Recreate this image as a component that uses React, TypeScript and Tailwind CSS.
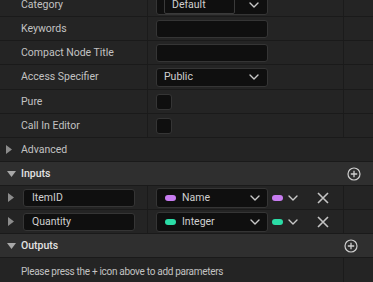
import React from 'react';

const FONT = { fontFamily: 'Roboto, "Noto Sans", sans-serif' };

function Chevron({ className = '' }: { className?: string }) {
  return (
    <svg width="10" height="6" viewBox="0 0 10 6" className={className}>
      <path d="M1 1l4 4 4-4" fill="none" stroke="#c8c8c8" strokeWidth="1.4" strokeLinecap="round" strokeLinejoin="round" />
    </svg>
  );
}

function TriRight() {
  return (
    <svg width="6" height="9" viewBox="0 0 6 9">
      <path d="M0 0L6 4.5 0 9z" fill="#8c8c8c" />
    </svg>
  );
}

function TriDown() {
  return (
    <svg width="9" height="6" viewBox="0 0 9 6">
      <path d="M0 0h9L4.5 6z" fill="#a8a8a8" />
    </svg>
  );
}

function PlusCircle() {
  return (
    <svg width="14" height="14" viewBox="0 0 14 14">
      <circle cx="7" cy="7" r="6" fill="none" stroke="#cfcfcf" strokeWidth="1.2" />
      <path d="M7 3.8v6.4M3.8 7h6.4" stroke="#cfcfcf" strokeWidth="1.3" />
    </svg>
  );
}

function Cross() {
  return (
    <svg width="12" height="12" viewBox="0 0 12 12">
      <path d="M1 1l10 10M11 1L1 11" stroke="#c4c4c4" strokeWidth="1.6" />
    </svg>
  );
}

function TextBox() {
  return <div className="w-[112px] h-[18px] rounded-[3px] bg-[#0f0f0f] border border-[#353535]" />;
}

function CheckBox() {
  return <div className="w-[16px] h-[16px] rounded-[3px] bg-[#0f0f0f] border border-[#353535]" />;
}

// property row: name | value | empty gutter
function PropRow({ label, tall, children }: { label: string; tall?: boolean; children?: React.ReactNode }) {
  return (
    <div className={`flex ${tall ? 'h-[25px]' : 'h-[24px]'} shrink-0 bg-[#242424] border-b border-[#1a1a1a]`}>
      <div className="w-[148px] flex items-center pl-[21px] border-r border-[#1b1b1b] text-[#c2c2c2]">{label}</div>
      <div className="w-[196px] flex items-center pl-[8px] border-r border-[#1b1b1b]">{children}</div>
      <div className="flex-1" />
    </div>
  );
}

function Header({ label, plusPad }: { label: string; plusPad: string }) {
  return (
    <div className="flex h-[24px] shrink-0 items-center bg-[#2f2f2f] border-b border-[#1a1a1a]">
      <div className="w-[21px] flex justify-center pl-[1px]">
        <TriDown />
      </div>
      <span className="font-medium text-[#e2e2e2]">{label}</span>
      <div className={`ml-auto flex items-center ${plusPad}`}>
        <PlusCircle />
      </div>
    </div>
  );
}

function ParamRow({ name, type, color }: { name: string; type: string; color: string }) {
  return (
    <div className="flex h-[24px] shrink-0 bg-[#242424] border-b border-[#1a1a1a]">
      <div className="w-[148px] flex items-center border-r border-[#1b1b1b]">
        <div className="w-[23px] flex justify-center pr-[1px]">
          <TriRight />
        </div>
        <div className="w-[112px] h-[18px] rounded-[3px] bg-[#0f0f0f] border border-[#353535] flex items-center pl-[8px] text-[#cfcfcf]">
          {name}
        </div>
      </div>
      <div className="w-[196px] flex items-center pl-[8px] border-r border-[#1b1b1b]">
        <div className="w-[112px] h-[20px] rounded-[3px] bg-[#0f0f0f] border border-[#353535] flex items-center pl-[8px] pr-[7px]">
          <span className="w-[11px] h-[6px] rounded-full" style={{ background: color }} />
          <span className="ml-[6px] text-[#cfcfcf]">{type}</span>
          <Chevron className="ml-auto" />
        </div>
        <span className="ml-[4px] w-[11px] h-[6px] rounded-full" style={{ background: color }} />
        <Chevron className="ml-[5px]" />
        <div className="ml-[19px]">
          <Cross />
        </div>
      </div>
      <div className="flex-1" />
    </div>
  );
}

export default function App() {
  return (
    <div className="w-[373px] h-[282px] overflow-hidden bg-[#242424] text-[10.5px]" style={FONT}>
      <div className="flex flex-col -mt-[7px]">
        <PropRow label="Category">
          <div className="w-[112px] h-[20px] rounded-[3px] bg-[#0f0f0f] border border-[#353535] flex items-center pl-[7px] pr-[8px]">
            <div className="w-[71px] h-[18px] rounded-[2px] border border-[#3a3a3a] flex items-center pl-[7px] text-[#cfcfcf]">
              Default
            </div>
            <Chevron className="ml-auto" />
          </div>
        </PropRow>
        <PropRow label="Keywords">
          <TextBox />
        </PropRow>
        <PropRow label="Compact Node Title">
          <TextBox />
        </PropRow>
        <PropRow label="Access Specifier" tall>
          <div className="w-[112px] h-[19px] rounded-[3px] bg-[#0f0f0f] border border-[#353535] flex items-center pl-[7px] pr-[8px] text-[#cfcfcf]">
            Public
            <Chevron className="ml-auto" />
          </div>
        </PropRow>
        <PropRow label="Pure">
          <CheckBox />
        </PropRow>
        <PropRow label="Call In Editor">
          <CheckBox />
        </PropRow>
        <div className="flex h-[24px] shrink-0 items-center bg-[#242424] border-b border-[#1a1a1a]">
          <div className="w-[21px] flex justify-center pr-[3px]">
            <TriRight />
          </div>
          <span className="text-[#c2c2c2]">Advanced</span>
        </div>
        <Header label="Inputs" plusPad="pr-[12px]" />
        <ParamRow name="ItemID" type="Name" color="#c77cf0" />
        <ParamRow name="Quantity" type="Integer" color="#2bdca6" />
        <Header label="Outputs" plusPad="pr-[15px]" />
        <div className="flex h-[26px] shrink-0 bg-[#242424]">
          <div className="w-[344px] flex items-center pl-[21px] border-r border-[#1b1b1b] text-[10px] tracking-[-0.3px] text-[#c2c2c2]">
            Please press the + icon above to add parameters
          </div>
          <div className="flex-1" />
        </div>
      </div>
    </div>
  );
}
